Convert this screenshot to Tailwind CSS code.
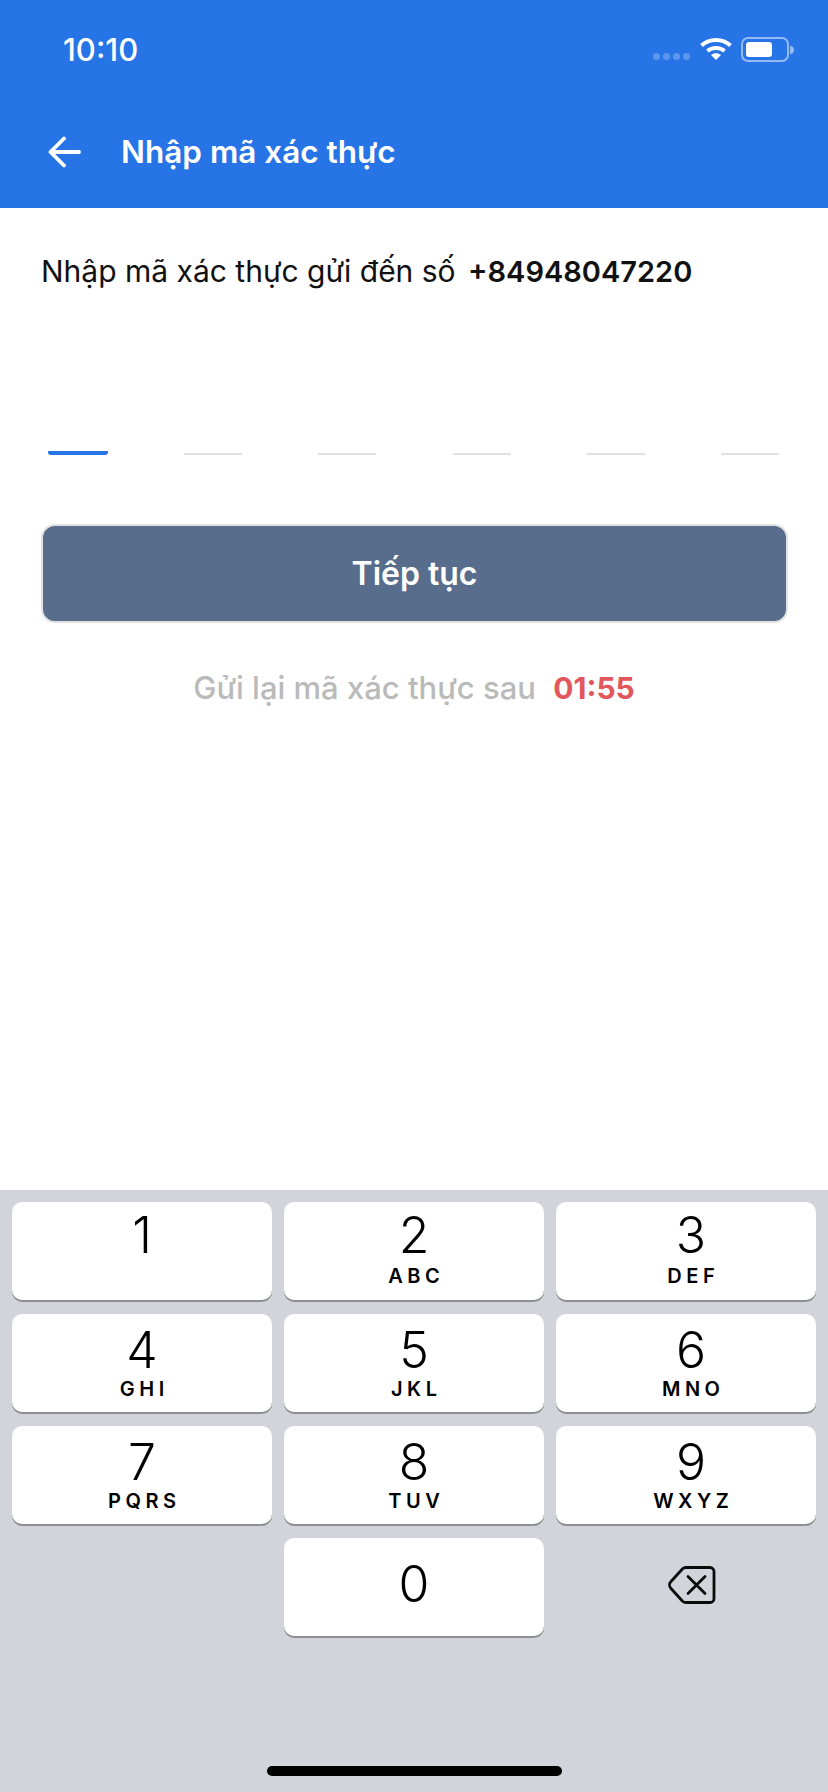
<!DOCTYPE html>
<html lang="en">
<head>
    <title>Nhập mã xác thực</title>
    <meta charset="UTF-8">
    <meta name="viewport" content="width=device-width, initial-scale=1.0">
    <script src="https://cdn.jsdelivr.net/npm/@tailwindcss/browser@4"></script>
</head>
<body class="bg-white font-['Inter',sans-serif]">
    <div class="flex flex-col w-[828px] h-[1792px] overflow-hidden">
        <!-- header -->
        <div class="h-[208px] bg-[#2674e6] text-white flex flex-col shrink-0">
            <div class="h-[100px] flex justify-between pl-[63px] pr-[34px] pt-[30px]">
                <span class="text-[31px] leading-[40px] font-medium">10:10</span>
                <div class="flex items-start h-[40px] gap-[9px] pt-[7px]">
                    <div class="flex gap-[3px] mt-[16px] mr-[1px]">
                        <i class="size-[7px] rounded-full bg-white/25"></i>
                        <i class="size-[7px] rounded-full bg-white/25"></i>
                        <i class="size-[7px] rounded-full bg-white/25"></i>
                        <i class="size-[7px] rounded-full bg-white/25"></i>
                    </div>
                    <svg class="w-[32px] h-[24px]" viewBox="0 0 32 24" fill="none"><path d="M1.500 8.500C9.500 1 22.500 1 30.500 8.500" stroke="#fff" stroke-width="4"/><path d="M7.500 14C12 10 20 10 24.500 14" stroke="#fff" stroke-width="4"/><path d="M16 23l-5-5c3-2.400 7-2.400 10 0z" fill="#fff"/></svg>
                    <div class="flex items-center">
                        <div class="w-[48px] h-[25px] rounded-[7px] border-2 border-white/50 p-[3px]">
                            <div class="w-[26px] h-full rounded-[3px] bg-white"></div>
                        </div>
                        <i class="w-[4px] h-[8px] ml-[1px] rounded-r-full bg-white/50"></i>
                    </div>
                </div>
            </div>
            <div class="flex items-center h-[52px] mt-[26px] pl-[48px]">
                <svg class="w-[33px] h-[32px]" viewBox="0 0 33 32" fill="none"><path d="M31 16H3M16 2.500 2.500 16 16 29.500" stroke="#fff" stroke-width="3.800" stroke-linecap="round" stroke-linejoin="round"/></svg>
                <span class="ml-[40px] text-[31.500px] leading-[40px] font-semibold">Nhập mã xác thực</span>
            </div>
        </div>

        <!-- content -->
        <div class="flex-1 px-[41px] pt-[45px]">
            <p class="text-[30px] leading-[36px] text-[#111]">Nhập mã xác thực gửi đến số <span class="ml-[4px] text-[29px] font-semibold">+84948047220</span></p>
            <div class="flex justify-between mt-[161px] pl-[7px] pr-[8px]">
                <div class="w-[60px] h-[4px] rounded-b-[3px] bg-[#2674e6]"></div>
                <div class="w-[58px] h-[2px] mt-[2px] bg-[#e0e0e0]"></div>
                <div class="w-[58px] h-[2px] mt-[2px] bg-[#e0e0e0]"></div>
                <div class="w-[58px] h-[2px] mt-[2px] bg-[#e0e0e0]"></div>
                <div class="w-[58px] h-[2px] mt-[2px] bg-[#e0e0e0]"></div>
                <div class="w-[58px] h-[2px] mt-[2px] bg-[#e0e0e0]"></div>
            </div>
            <button class="block w-[747px] h-[99px] mt-[69px] rounded-[14px] border-2 border-[#e2e2e2] bg-[#586d8b] text-white text-[32px] font-semibold">Tiếp tục</button>
            <p class="mt-[47px] text-center text-[31px] leading-[36px] font-medium text-[#bababa]">Gửi lại mã xác thực sau <span class="ml-[9px] text-[30px] font-bold text-[#e2575b]">01:55</span></p>
        </div>

        <!-- keypad -->
        <div class="relative h-[602px] shrink-0 bg-[#d1d4da] px-[12px] pt-[12px]">
            <div class="grid grid-cols-3 gap-x-[12px] gap-y-[14px] text-black">
                <div class="h-[98px] rounded-[10px] bg-white shadow-[0_2px_0_#8e8f92] flex flex-col items-center"><span class="text-[50px] leading-[58px] mt-[4px] font-[350]">1</span></div>
                <div class="h-[98px] rounded-[10px] bg-white shadow-[0_2px_0_#8e8f92] flex flex-col items-center"><span class="text-[50px] leading-[58px] mt-[4px] font-[350]">2</span><span class="text-[20px] leading-[20px] mt-[2px] font-semibold tracking-[4.500px] mr-[-4.500px]">ABC</span></div>
                <div class="h-[98px] rounded-[10px] bg-white shadow-[0_2px_0_#8e8f92] flex flex-col items-center pl-[10px]"><span class="text-[50px] leading-[58px] mt-[4px] font-[350]">3</span><span class="text-[20px] leading-[20px] mt-[2px] font-semibold tracking-[4.500px] mr-[-4.500px]">DEF</span></div>
                <div class="h-[98px] rounded-[10px] bg-white shadow-[0_2px_0_#8e8f92] flex flex-col items-center"><span class="text-[50px] leading-[58px] mt-[7px] font-[350]">4</span><span class="text-[20px] leading-[20px] font-semibold tracking-[4.500px] mr-[-4.500px]">GHI</span></div>
                <div class="h-[98px] rounded-[10px] bg-white shadow-[0_2px_0_#8e8f92] flex flex-col items-center"><span class="text-[50px] leading-[58px] mt-[7px] font-[350]">5</span><span class="text-[20px] leading-[20px] font-semibold tracking-[4.500px] mr-[-4.500px]">JKL</span></div>
                <div class="h-[98px] rounded-[10px] bg-white shadow-[0_2px_0_#8e8f92] flex flex-col items-center pl-[10px]"><span class="text-[50px] leading-[58px] mt-[7px] font-[350]">6</span><span class="text-[20px] leading-[20px] font-semibold tracking-[4.500px] mr-[-4.500px]">MNO</span></div>
                <div class="h-[98px] rounded-[10px] bg-white shadow-[0_2px_0_#8e8f92] flex flex-col items-center"><span class="text-[50px] leading-[58px] mt-[7px] font-[350]">7</span><span class="text-[20px] leading-[20px] font-semibold tracking-[4.500px] mr-[-4.500px]">PQRS</span></div>
                <div class="h-[98px] rounded-[10px] bg-white shadow-[0_2px_0_#8e8f92] flex flex-col items-center"><span class="text-[50px] leading-[58px] mt-[7px] font-[350]">8</span><span class="text-[20px] leading-[20px] font-semibold tracking-[4.500px] mr-[-4.500px]">TUV</span></div>
                <div class="h-[98px] rounded-[10px] bg-white shadow-[0_2px_0_#8e8f92] flex flex-col items-center pl-[10px]"><span class="text-[50px] leading-[58px] mt-[7px] font-[350]">9</span><span class="text-[20px] leading-[20px] font-semibold tracking-[4.500px] mr-[-4.500px]">WXYZ</span></div>
                <div></div>
                <div class="h-[98px] rounded-[10px] bg-white shadow-[0_2px_0_#8e8f92] flex items-center justify-center"><span class="text-[50px] leading-[58px] mb-[6px] font-[350]">0</span></div>
                <div class="h-[98px] flex items-center justify-center">
                    <svg class="w-[48px] h-[40px] ml-[11px] mb-[5px]" viewBox="0 0 48 40" fill="none"><path d="M18 2.500h24a4 4 0 0 1 4 4v27a4 4 0 0 1-4 4H18a5 5 0 0 1-3.400-1.300L3 23.500a5 5 0 0 1 0-7L14.600 3.800A5 5 0 0 1 18 2.500z" stroke="#0a0a0a" stroke-width="2.800" stroke-linejoin="round"/><path d="M20 11.500l17 17M37 11.500l-17 17" stroke="#0a0a0a" stroke-width="2.800" stroke-linecap="round"/></svg>
                </div>
            </div>
            <div class="absolute left-[267px] bottom-[16px] w-[295px] h-[10px] rounded-full bg-black"></div>
        </div>
    </div>
</body>
</html>
